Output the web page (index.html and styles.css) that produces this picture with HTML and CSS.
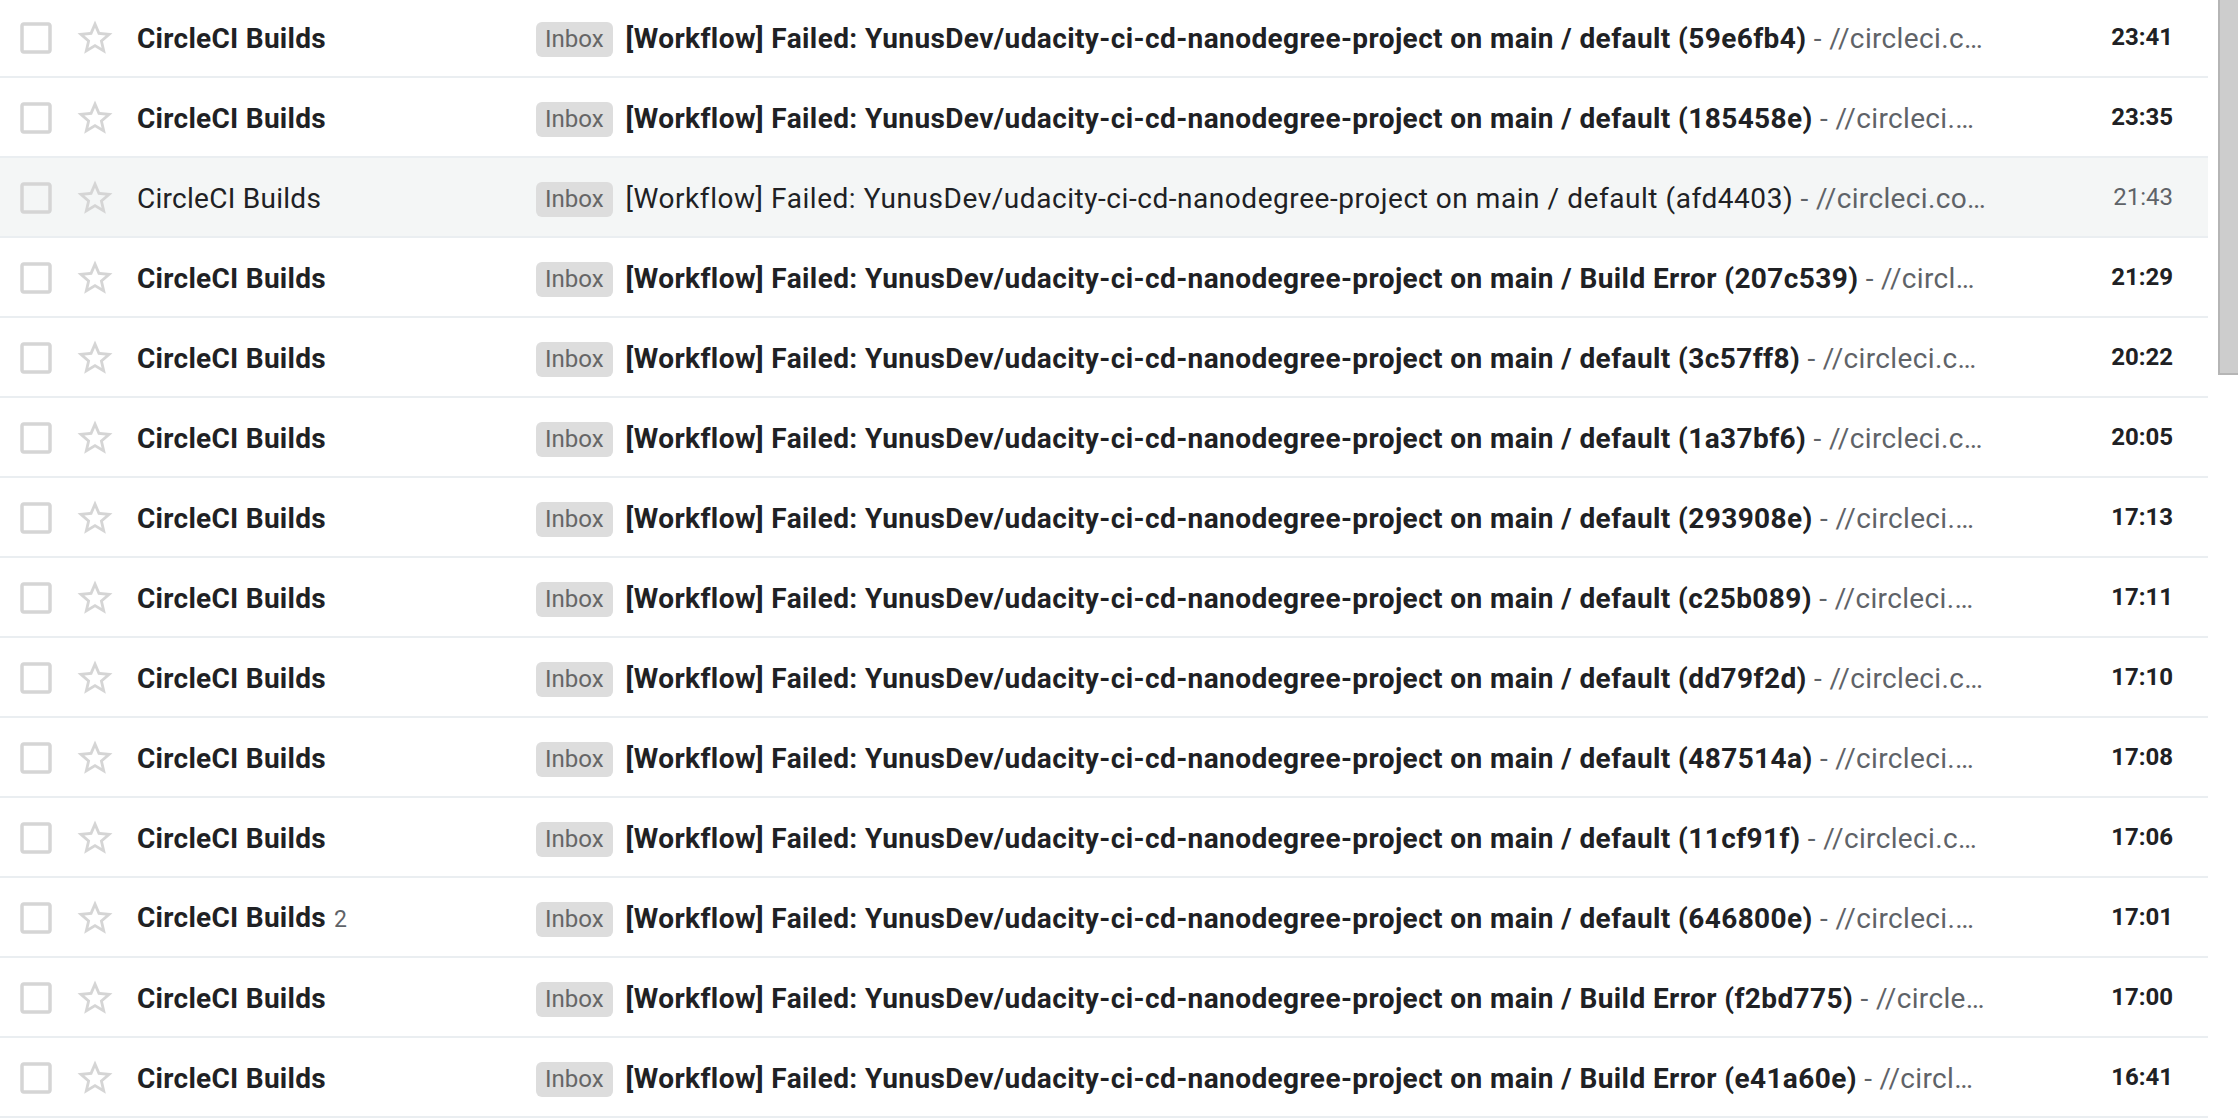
FILE: index.html
```html
<!DOCTYPE html>
<html>
<head>
<meta charset="utf-8">
<link rel="stylesheet" href="styles.css">
</head>
<body>
<div class="page">
  <div class="list">
    <div class="row unread"><span class="cb"><svg viewBox="0 0 24 24"><path d="M19 5v14H5V5h14m0-2H5c-1.11 0-2 .9-2 2v14c0 1.1.89 2 2 2h14c1.1 0 2-.9 2-2V5c0-1.1-.9-2-2-2z"/></svg></span><span class="star"><svg viewBox="0 0 24 24"><path d="M22 9.24l-7.19-.62L12 2 9.190 8.63 2 9.240l5.46 4.73L5.82 21 12 17.27 18.18 21l-1.63-7.03L22 9.24zM12 15.4l-3.76 2.27 1-4.28-3.32-2.88 4.38-.38L12 6.1l1.71 4.04 4.38.38-3.32 2.88 1 4.28L12 15.4z"/></svg></span><span class="sender">CircleCI Builds</span><span class="label">Inbox</span><span class="subj"><span class="s">[Workflow] Failed: YunusDev/udacity-ci-cd-nanodegree-project on main / default (59e6fb4)</span><span class="snip"> - //circleci.c…</span></span><span class="time">23:41</span></div>
    <div class="row unread"><span class="cb"><svg viewBox="0 0 24 24"><path d="M19 5v14H5V5h14m0-2H5c-1.11 0-2 .9-2 2v14c0 1.1.89 2 2 2h14c1.1 0 2-.9 2-2V5c0-1.1-.9-2-2-2z"/></svg></span><span class="star"><svg viewBox="0 0 24 24"><path d="M22 9.24l-7.19-.62L12 2 9.19 8.63 2 9.24l5.46 4.73L5.82 21 12 17.27 18.18 21l-1.63-7.03L22 9.24zM12 15.4l-3.76 2.27 1-4.28-3.32-2.88 4.38-.38L12 6.1l1.71 4.04 4.38.38-3.32 2.88 1 4.28L12 15.4z"/></svg></span><span class="sender">CircleCI Builds</span><span class="label">Inbox</span><span class="subj"><span class="s">[Workflow] Failed: YunusDev/udacity-ci-cd-nanodegree-project on main / default (185458e)</span><span class="snip"> - //circleci.…</span></span><span class="time">23:35</span></div>
    <div class="row read"><span class="cb"><svg viewBox="0 0 24 24"><path d="M19 5v14H5V5h14m0-2H5c-1.11 0-2 .9-2 2v14c0 1.1.89 2 2 2h14c1.1 0 2-.9 2-2V5c0-1.1-.9-2-2-2z"/></svg></span><span class="star"><svg viewBox="0 0 24 24"><path d="M22 9.24l-7.19-.62L12 2 9.19 8.63 2 9.24l5.46 4.73L5.82 21 12 17.27 18.18 21l-1.63-7.03L22 9.24zM12 15.4l-3.76 2.27 1-4.28-3.32-2.88 4.38-.38L12 6.1l1.71 4.04 4.38.38-3.32 2.88 1 4.28L12 15.4z"/></svg></span><span class="sender">CircleCI Builds</span><span class="label">Inbox</span><span class="subj"><span class="s">[Workflow] Failed: YunusDev/udacity-ci-cd-nanodegree-project on main / default (afd4403)</span><span class="snip"> - //circleci.co…</span></span><span class="time">21:43</span></div>
    <div class="row unread"><span class="cb"><svg viewBox="0 0 24 24"><path d="M19 5v14H5V5h14m0-2H5c-1.11 0-2 .9-2 2v14c0 1.1.89 2 2 2h14c1.1 0 2-.9 2-2V5c0-1.1-.9-2-2-2z"/></svg></span><span class="star"><svg viewBox="0 0 24 24"><path d="M22 9.24l-7.19-.62L12 2 9.19 8.63 2 9.24l5.46 4.73L5.82 21 12 17.27 18.18 21l-1.63-7.03L22 9.24zM12 15.4l-3.76 2.27 1-4.28-3.32-2.88 4.38-.38L12 6.1l1.71 4.04 4.38.38-3.32 2.88 1 4.28L12 15.4z"/></svg></span><span class="sender">CircleCI Builds</span><span class="label">Inbox</span><span class="subj"><span class="s">[Workflow] Failed: YunusDev/udacity-ci-cd-nanodegree-project on main / Build Error (207c539)</span><span class="snip"> - //circl…</span></span><span class="time">21:29</span></div>
    <div class="row unread"><span class="cb"><svg viewBox="0 0 24 24"><path d="M19 5v14H5V5h14m0-2H5c-1.11 0-2 .9-2 2v14c0 1.1.89 2 2 2h14c1.1 0 2-.9 2-2V5c0-1.1-.9-2-2-2z"/></svg></span><span class="star"><svg viewBox="0 0 24 24"><path d="M22 9.24l-7.19-.62L12 2 9.19 8.63 2 9.24l5.46 4.73L5.82 21 12 17.27 18.18 21l-1.63-7.03L22 9.24zM12 15.4l-3.76 2.27 1-4.28-3.32-2.88 4.38-.38L12 6.1l1.71 4.04 4.38.38-3.32 2.88 1 4.28L12 15.4z"/></svg></span><span class="sender">CircleCI Builds</span><span class="label">Inbox</span><span class="subj"><span class="s">[Workflow] Failed: YunusDev/udacity-ci-cd-nanodegree-project on main / default (3c57ff8)</span><span class="snip"> - //circleci.c…</span></span><span class="time">20:22</span></div>
    <div class="row unread"><span class="cb"><svg viewBox="0 0 24 24"><path d="M19 5v14H5V5h14m0-2H5c-1.11 0-2 .9-2 2v14c0 1.1.89 2 2 2h14c1.1 0 2-.9 2-2V5c0-1.1-.9-2-2-2z"/></svg></span><span class="star"><svg viewBox="0 0 24 24"><path d="M22 9.24l-7.19-.62L12 2 9.19 8.63 2 9.24l5.46 4.73L5.82 21 12 17.27 18.18 21l-1.63-7.03L22 9.24zM12 15.4l-3.76 2.27 1-4.28-3.32-2.88 4.38-.38L12 6.1l1.71 4.04 4.38.38-3.32 2.88 1 4.28L12 15.4z"/></svg></span><span class="sender">CircleCI Builds</span><span class="label">Inbox</span><span class="subj"><span class="s">[Workflow] Failed: YunusDev/udacity-ci-cd-nanodegree-project on main / default (1a37bf6)</span><span class="snip"> - //circleci.c…</span></span><span class="time">20:05</span></div>
    <div class="row unread"><span class="cb"><svg viewBox="0 0 24 24"><path d="M19 5v14H5V5h14m0-2H5c-1.11 0-2 .9-2 2v14c0 1.1.89 2 2 2h14c1.1 0 2-.9 2-2V5c0-1.1-.9-2-2-2z"/></svg></span><span class="star"><svg viewBox="0 0 24 24"><path d="M22 9.24l-7.19-.62L12 2 9.19 8.63 2 9.24l5.46 4.73L5.82 21 12 17.27 18.18 21l-1.63-7.03L22 9.24zM12 15.4l-3.76 2.27 1-4.28-3.32-2.88 4.38-.38L12 6.1l1.71 4.04 4.38.38-3.32 2.88 1 4.28L12 15.4z"/></svg></span><span class="sender">CircleCI Builds</span><span class="label">Inbox</span><span class="subj"><span class="s">[Workflow] Failed: YunusDev/udacity-ci-cd-nanodegree-project on main / default (293908e)</span><span class="snip"> - //circleci.…</span></span><span class="time">17:13</span></div>
    <div class="row unread"><span class="cb"><svg viewBox="0 0 24 24"><path d="M19 5v14H5V5h14m0-2H5c-1.11 0-2 .9-2 2v14c0 1.1.89 2 2 2h14c1.1 0 2-.9 2-2V5c0-1.1-.9-2-2-2z"/></svg></span><span class="star"><svg viewBox="0 0 24 24"><path d="M22 9.24l-7.19-.62L12 2 9.19 8.63 2 9.24l5.46 4.73L5.82 21 12 17.27 18.18 21l-1.63-7.03L22 9.24zM12 15.4l-3.76 2.27 1-4.28-3.32-2.88 4.38-.38L12 6.1l1.71 4.04 4.38.38-3.32 2.88 1 4.28L12 15.4z"/></svg></span><span class="sender">CircleCI Builds</span><span class="label">Inbox</span><span class="subj"><span class="s">[Workflow] Failed: YunusDev/udacity-ci-cd-nanodegree-project on main / default (c25b089)</span><span class="snip"> - //circleci.…</span></span><span class="time">17:11</span></div>
    <div class="row unread"><span class="cb"><svg viewBox="0 0 24 24"><path d="M19 5v14H5V5h14m0-2H5c-1.11 0-2 .9-2 2v14c0 1.1.89 2 2 2h14c1.1 0 2-.9 2-2V5c0-1.1-.9-2-2-2z"/></svg></span><span class="star"><svg viewBox="0 0 24 24"><path d="M22 9.24l-7.19-.62L12 2 9.19 8.63 2 9.24l5.46 4.73L5.82 21 12 17.27 18.18 21l-1.63-7.03L22 9.24zM12 15.4l-3.76 2.27 1-4.28-3.32-2.88 4.38-.38L12 6.1l1.71 4.04 4.38.38-3.32 2.88 1 4.28L12 15.4z"/></svg></span><span class="sender">CircleCI Builds</span><span class="label">Inbox</span><span class="subj"><span class="s">[Workflow] Failed: YunusDev/udacity-ci-cd-nanodegree-project on main / default (dd79f2d)</span><span class="snip"> - //circleci.c…</span></span><span class="time">17:10</span></div>
    <div class="row unread"><span class="cb"><svg viewBox="0 0 24 24"><path d="M19 5v14H5V5h14m0-2H5c-1.11 0-2 .9-2 2v14c0 1.1.89 2 2 2h14c1.1 0 2-.9 2-2V5c0-1.1-.9-2-2-2z"/></svg></span><span class="star"><svg viewBox="0 0 24 24"><path d="M22 9.24l-7.19-.62L12 2 9.19 8.63 2 9.24l5.46 4.73L5.82 21 12 17.27 18.18 21l-1.63-7.03L22 9.24zM12 15.4l-3.76 2.27 1-4.28-3.32-2.88 4.38-.38L12 6.1l1.71 4.04 4.38.38-3.32 2.88 1 4.28L12 15.4z"/></svg></span><span class="sender">CircleCI Builds</span><span class="label">Inbox</span><span class="subj"><span class="s">[Workflow] Failed: YunusDev/udacity-ci-cd-nanodegree-project on main / default (487514a)</span><span class="snip"> - //circleci.…</span></span><span class="time">17:08</span></div>
    <div class="row unread"><span class="cb"><svg viewBox="0 0 24 24"><path d="M19 5v14H5V5h14m0-2H5c-1.11 0-2 .9-2 2v14c0 1.1.89 2 2 2h14c1.1 0 2-.9 2-2V5c0-1.1-.9-2-2-2z"/></svg></span><span class="star"><svg viewBox="0 0 24 24"><path d="M22 9.24l-7.19-.62L12 2 9.19 8.63 2 9.24l5.46 4.73L5.82 21 12 17.27 18.18 21l-1.63-7.03L22 9.24zM12 15.4l-3.76 2.27 1-4.28-3.32-2.88 4.38-.38L12 6.1l1.71 4.04 4.38.38-3.32 2.88 1 4.28L12 15.4z"/></svg></span><span class="sender">CircleCI Builds</span><span class="label">Inbox</span><span class="subj"><span class="s">[Workflow] Failed: YunusDev/udacity-ci-cd-nanodegree-project on main / default (11cf91f)</span><span class="snip"> - //circleci.c…</span></span><span class="time">17:06</span></div>
    <div class="row unread"><span class="cb"><svg viewBox="0 0 24 24"><path d="M19 5v14H5V5h14m0-2H5c-1.11 0-2 .9-2 2v14c0 1.1.89 2 2 2h14c1.1 0 2-.9 2-2V5c0-1.1-.9-2-2-2z"/></svg></span><span class="star"><svg viewBox="0 0 24 24"><path d="M22 9.24l-7.19-.62L12 2 9.19 8.63 2 9.24l5.46 4.73L5.82 21 12 17.27 18.18 21l-1.63-7.03L22 9.24zM12 15.4l-3.76 2.27 1-4.28-3.32-2.88 4.38-.38L12 6.1l1.71 4.04 4.38.38-3.32 2.88 1 4.28L12 15.4z"/></svg></span><span class="sender">CircleCI Builds<span class="count">2</span></span><span class="label">Inbox</span><span class="subj"><span class="s">[Workflow] Failed: YunusDev/udacity-ci-cd-nanodegree-project on main / default (646800e)</span><span class="snip"> - //circleci.…</span></span><span class="time">17:01</span></div>
    <div class="row unread"><span class="cb"><svg viewBox="0 0 24 24"><path d="M19 5v14H5V5h14m0-2H5c-1.11 0-2 .9-2 2v14c0 1.1.89 2 2 2h14c1.1 0 2-.9 2-2V5c0-1.1-.9-2-2-2z"/></svg></span><span class="star"><svg viewBox="0 0 24 24"><path d="M22 9.24l-7.19-.62L12 2 9.19 8.63 2 9.24l5.46 4.73L5.82 21 12 17.27 18.18 21l-1.63-7.03L22 9.24zM12 15.4l-3.76 2.27 1-4.28-3.32-2.88 4.38-.38L12 6.1l1.71 4.04 4.38.38-3.32 2.88 1 4.28L12 15.4z"/></svg></span><span class="sender">CircleCI Builds</span><span class="label">Inbox</span><span class="subj"><span class="s">[Workflow] Failed: YunusDev/udacity-ci-cd-nanodegree-project on main / Build Error (f2bd775)</span><span class="snip"> - //circle…</span></span><span class="time">17:00</span></div>
    <div class="row unread"><span class="cb"><svg viewBox="0 0 24 24"><path d="M19 5v14H5V5h14m0-2H5c-1.11 0-2 .9-2 2v14c0 1.1.89 2 2 2h14c1.1 0 2-.9 2-2V5c0-1.1-.9-2-2-2z"/></svg></span><span class="star"><svg viewBox="0 0 24 24"><path d="M22 9.24l-7.19-.62L12 2 9.19 8.63 2 9.24l5.46 4.73L5.82 21 12 17.27 18.18 21l-1.63-7.03L22 9.24zM12 15.4l-3.76 2.27 1-4.28-3.32-2.88 4.38-.38L12 6.1l1.71 4.04 4.38.38-3.32 2.88 1 4.28L12 15.4z"/></svg></span><span class="sender">CircleCI Builds</span><span class="label">Inbox</span><span class="subj"><span class="s">[Workflow] Failed: YunusDev/udacity-ci-cd-nanodegree-project on main / Build Error (e41a60e)</span><span class="snip"> - //circl…</span></span><span class="time">16:41</span></div>
  </div>
  <div class="scrollbar"><div class="thumb"></div></div>
</div>
</body>
</html>
```
FILE: styles.css
```css
html, body {
  margin: 0;
  padding: 0;
  background: #ffffff;
  overflow: hidden;
}
body {
  font-family: Roboto, "Liberation Sans", Arial, sans-serif;
  color: #202124;
}
.page {
  display: flex;
  width: 2238px;
  height: 1120px;
  overflow: hidden;
}
.list {
  width: 2208px;
  flex: 0 0 2208px;
  margin-top: -2px;
}
.row {
  display: flex;
  align-items: center;
  box-sizing: border-box;
  height: 80px;
  padding: 4px 35px 0 15px;
  border-bottom: 2px solid #eaeef1;
  white-space: nowrap;
}
.row.read {
  background: #f4f6f6;
}
.cb, .star {
  display: flex;
  width: 42px;
  height: 42px;
  flex: 0 0 42px;
  margin-top: -3px;
}
.cb svg, .star svg {
  width: 42px;
  height: 42px;
  fill: #d5d5d5;
}
.star {
  margin-left: 17px;
}
.sender {
  flex: 0 0 399px;
  width: 399px;
  margin-left: 21px;
  font-size: 28px;
  line-height: 40px;
  letter-spacing: 0.27px;
  overflow: hidden;
}
.count {
  margin-left: 8px;
  font-size: 23px;
  font-weight: 400;
  letter-spacing: 0;
  color: #5f6368;
}
.label {
  flex: 0 0 auto;
  height: 35px;
  line-height: 35px;
  padding: 0 9px;
  border-radius: 6px;
  background: #dddddd;
  color: #666666;
  font-size: 24px;
  font-weight: 400;
}
.subj {
  flex: 1 1 auto;
  min-width: 0;
  margin-left: 13px;
  font-size: 28px;
  line-height: 40px;
  overflow: hidden;
  text-overflow: ellipsis;
}
.s {
  letter-spacing: 0.4px;
}
.snip {
  color: #5f6368;
  font-weight: 400;
  letter-spacing: 0.35px;
}
.time {
  flex: 0 0 160px;
  width: 160px;
  margin-top: -4px;
  text-align: right;
  font-size: 24px;
  line-height: 40px;
}
.unread .sender, .unread .s, .unread .time {
  font-weight: 700;
}
.read .sender, .read .s {
  font-weight: 400;
}
.read .s {
  letter-spacing: 0.55px;
}
.read .time {
  font-weight: 400;
  color: #5f6368;
}
.scrollbar {
  margin-left: 10px;
  width: 20px;
  flex: 0 0 20px;
  height: 1120px;
  background: #ffffff;
}
.thumb {
  box-sizing: border-box;
  height: 375px;
  background: #cdcdcd;
  border-left: 2px solid #b5b5b5;
  border-bottom: 2px solid #b5b5b5;
}
```
